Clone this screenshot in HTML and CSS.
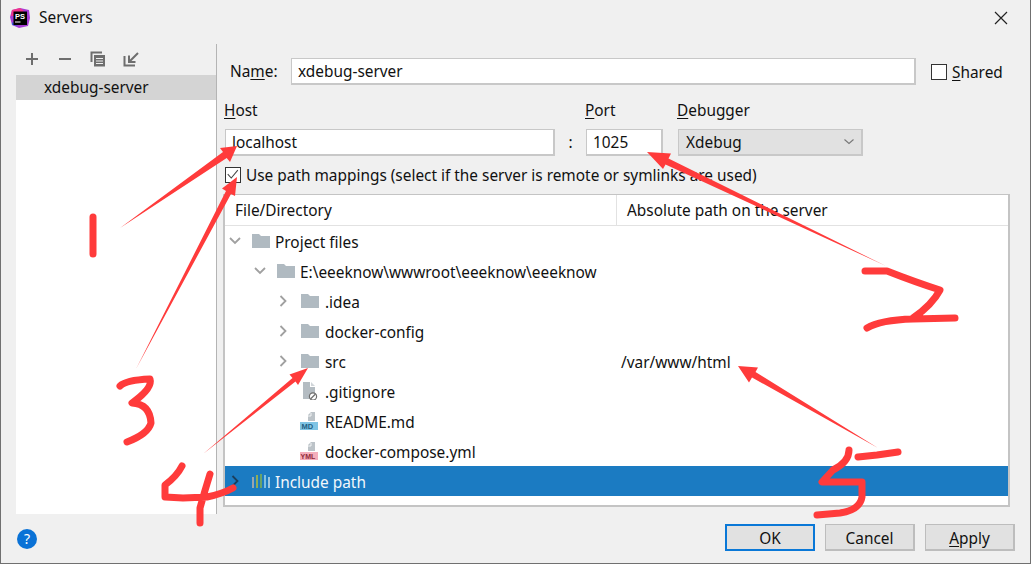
FILE: index.html
```html
<!DOCTYPE html>
<html lang="en">
<head>
<meta charset="utf-8">
<title>Servers</title>
<link rel="stylesheet" href="styles.css">
</head>
<body>
<div class="window">
  <header class="titlebar">
    <svg class="logo" viewBox="0 0 20 20" width="20" height="20">
      <path d="M2 2 L10 0 L19 2 L20 10 L18 18 L9 20 L2 17 L0 9Z" fill="#a63bd6"/>
      <path d="M2 2 L10 0 L14 3 L6 8 L1 8Z" fill="#f0338c"/>
      <path d="M2 14 L8 18 L2 17Z" fill="#3b5bdb"/>
      <rect x="3.5" y="3.5" width="13.5" height="13.5" fill="#000"/>
      <text x="5" y="10.5" class="logo-text">PS</text>
      <rect x="5" y="13.5" width="5.5" height="1" fill="#fff"/>
    </svg>
    <span class="title">Servers</span>
    <svg class="close" viewBox="0 0 14 14" width="14" height="14"><path d="M1 1 L13 13 M13 1 L1 13" stroke="#222" stroke-width="1.2" fill="none"/></svg>
  </header>

  <div class="content">
    <aside class="sidebar">
      <div class="toolbar">
        <svg viewBox="0 0 16 16" width="16" height="16"><path d="M8 2 V14 M2 8 H14" stroke="#6e6e6e" stroke-width="2" fill="none"/></svg>
        <svg viewBox="0 0 16 16" width="16" height="16"><path d="M2 8 H14" stroke="#6e6e6e" stroke-width="2" fill="none"/></svg>
        <svg viewBox="0 0 16 16" width="16" height="16"><path d="M1.5 11 V1.5 H12" stroke="#6e6e6e" stroke-width="2" fill="none"/><rect x="4" y="4" width="11" height="11.5" fill="#6e6e6e"/><path d="M6 7.5 H13 M6 10 H13 M6 12.5 H13" stroke="#f0f0f0" stroke-width="1.1"/></svg>
        <svg viewBox="0 0 16 16" width="16" height="16"><path d="M1.5 5 V14.5 H12" stroke="#6e6e6e" stroke-width="2" fill="none"/><path d="M15 2 L7 10 M6 4.5 V11 H12.5" stroke="#6e6e6e" stroke-width="2" fill="none"/></svg>
      </div>
      <div class="server-list">
        <div class="server-item">xdebug-server</div>
      </div>
    </aside>

    <main class="panel">
      <div class="name-row">
        <label class="name-label">Na<u>m</u>e:</label>
        <div class="field name-field">xdebug-server</div>
        <span class="checkbox"></span>
        <span class="shared"><u>S</u>hared</span>
      </div>

      <div class="host-grid">
        <label><u>H</u>ost</label>
        <span></span>
        <label><u>P</u>ort</label>
        <span></span>
        <label><u>D</u>ebugger</label>
        <div class="field">localhost</div>
        <span class="colon">:</span>
        <div class="field">1025</div>
        <span></span>
        <div class="select">Xdebug
          <svg viewBox="0 0 10 6" width="10" height="6"><path d="M0.5 0.5 L5 4.5 L9.5 0.5" stroke="#777" stroke-width="1.1" fill="none"/></svg>
        </div>
      </div>

      <div class="mapping-row">
        <span class="checkbox checked">
          <svg viewBox="0 0 16 16" width="14" height="14"><path d="M2 7 L6 11.5 L13.5 2.5" stroke="#444" stroke-width="1.2" fill="none"/></svg>
        </span>
        <span>Use path mappings (select if the server is remote or symlinks are used)</span>
      </div>

      <section class="table">
        <div class="thead">
          <div class="th th-file">File/Directory</div>
          <div class="th th-path">Absolute path on the server</div>
        </div>
        <div class="tr">
          <svg class="chev" viewBox="0 0 12 8" width="12" height="8"><path d="M1 1 L6 6 L11 1" stroke="#a0a0a0" stroke-width="1.8" fill="none"/></svg>
          <svg class="ficon" viewBox="0 0 18 14" width="18" height="14"><path d="M0 0 H7 L9 2 H18 V14 H0Z" fill="#b0bac1"/></svg>
          <span class="tname">Project files</span>
        </div>
        <div class="tr lvl1">
          <svg class="chev" viewBox="0 0 12 8" width="12" height="8"><path d="M1 1 L6 6 L11 1" stroke="#a0a0a0" stroke-width="1.8" fill="none"/></svg>
          <svg class="ficon" viewBox="0 0 18 14" width="18" height="14"><path d="M0 0 H7 L9 2 H18 V14 H0Z" fill="#b0bac1"/></svg>
          <span class="tname">E:\eeeknow\wwwroot\eeeknow\eeeknow</span>
        </div>
        <div class="tr lvl2">
          <svg class="chev" viewBox="0 0 12 12" width="12" height="12"><path d="M3.5 1 L8.5 6 L3.5 11" stroke="#a0a0a0" stroke-width="1.8" fill="none"/></svg>
          <svg class="ficon" viewBox="0 0 18 14" width="18" height="14"><path d="M0 0 H7 L9 2 H18 V14 H0Z" fill="#b0bac1"/></svg>
          <span class="tname">.idea</span>
        </div>
        <div class="tr lvl2">
          <svg class="chev" viewBox="0 0 12 12" width="12" height="12"><path d="M3.5 1 L8.5 6 L3.5 11" stroke="#a0a0a0" stroke-width="1.8" fill="none"/></svg>
          <svg class="ficon" viewBox="0 0 18 14" width="18" height="14"><path d="M0 0 H7 L9 2 H18 V14 H0Z" fill="#b0bac1"/></svg>
          <span class="tname">docker-config</span>
        </div>
        <div class="tr lvl2">
          <svg class="chev" viewBox="0 0 12 12" width="12" height="12"><path d="M3.5 1 L8.5 6 L3.5 11" stroke="#a0a0a0" stroke-width="1.8" fill="none"/></svg>
          <svg class="ficon" viewBox="0 0 18 14" width="18" height="14"><path d="M0 0 H7 L9 2 H18 V14 H0Z" fill="#b0bac1"/></svg>
          <span class="tname">src</span>
          <span class="tvalue">/var/www/html</span>
        </div>
        <div class="tr lvl3">
          <svg class="ficon" viewBox="0 0 18 18" width="18" height="18"><path d="M3 0 H10 V5 H15 V17 H3Z" fill="#b4bcc2"/><path d="M11 0 L15 4 H11Z" fill="#d0d5d9"/><circle cx="13" cy="14.5" r="3.6" fill="#fff" stroke="#6e6e6e" stroke-width="1.2"/><path d="M10.5 17 L15.5 12" stroke="#6e6e6e" stroke-width="1.2"/></svg>
          <span class="tname">.gitignore</span>
        </div>
        <div class="tr lvl3">
          <svg class="ficon" viewBox="0 0 18 18" width="18" height="18"><path d="M8 9 V3 L11 0 H15 V9Z" fill="#bcc3c8"/><path d="M11 1 V4 H8" stroke="#fff" stroke-width="0.8" fill="none"/><rect x="0" y="10" width="18" height="8" fill="#7fc4e4"/><text x="1.5" y="17" class="badge badge-md">MD</text></svg>
          <span class="tname">README.md</span>
        </div>
        <div class="tr lvl3">
          <svg class="ficon" viewBox="0 0 18 18" width="18" height="18"><path d="M8 9 V3 L11 0 H15 V9Z" fill="#bcc3c8"/><path d="M11 1 V4 H8" stroke="#fff" stroke-width="0.8" fill="none"/><rect x="0" y="10" width="18" height="8" fill="#f4aebb"/><text x="0.5" y="17" class="badge badge-yml">YML</text></svg>
          <span class="tname">docker-compose.yml</span>
        </div>
        <div class="tr selected">
          <svg class="chev" viewBox="0 0 12 12" width="12" height="12"><path d="M3.5 1 L8.5 6 L3.5 11" stroke="#1c3f5c" stroke-width="1.8" fill="none"/></svg>
          <svg class="ficon" viewBox="0 0 18 14" width="18" height="14"><path d="M1 3 V14" stroke="#9aa5ad" stroke-width="2"/><path d="M5 1 V14" stroke="#8fae5a" stroke-width="2"/><path d="M9 0 V14" stroke="#6aa36a" stroke-width="2"/><path d="M13 1 V14" stroke="#7fbfe0" stroke-width="2"/><path d="M17 3 V14" stroke="#9fc6dd" stroke-width="2"/></svg>
          <span class="tname">Include path</span>
        </div>
      </section>
    </main>
  </div>

  <footer class="footer">
    <span class="help">?</span>
    <div class="buttons">
      <button class="btn btn-default">OK</button>
      <button class="btn">Cancel</button>
      <button class="btn"><u>A</u>pply</button>
    </div>
  </footer>

  <svg class="annotations" viewBox="0 0 1031 564" width="1031" height="564">
    <g class="arrows">
      <polygon points="120,228 226.7,158 230,162 237,146 220,148 223,152"/>
      <polygon points="136,369 231,194 235,196 237,177 222,188.5 226,191"/>
      <polygon points="886,266 668.5,158.5 671,153.5 647,152 663,169 665.5,164.5"/>
      <polygon points="203,454 295.5,381.5 298,385 308,368 289.5,374.5 292.5,378"/>
      <polygon points="878,448 755.5,372 758,367.5 738,366 749,382.5 752,377.5"/>
    </g>
    <g class="digits">
      <path d="M93 217 V254"/>
      <path d="M120 386 Q126 380 150 379 Q153 388 132 403 Q150 404 151 423 Q148 434 127 442"/>
      <path d="M865 271 L887 271 Q915 282 940 290 Q932 305 913 318 M867 328 Q880 320 913 319 L955 318"/>
      <path d="M182 466 Q177 476 165 485 L165 497 L183 498 L207 497 Q222 494 233 488 M210 474 Q205 490 200 508 L200 523"/>
      <path d="M849 450 Q849 462 833 470 L822 482 L862 482 L862 497 Q860 510 840 513 L817 515 M858 457 L877 455 L898 452"/>
    </g>
  </svg>
</div>
</body>
</html>
```
FILE: styles.css
```css
* { box-sizing: border-box; }
html, body { margin: 0; padding: 0; }
body {
  width: 1031px;
  height: 564px;
  overflow: hidden;
  font-family: "Noto Sans", "Open Sans", sans-serif;
  font-size: 15.4px;
  color: #111;
}
u { text-decoration-thickness: 1px; text-underline-offset: 2px; }

.window {
  position: relative;
  width: 1031px;
  height: 564px;
  background: #f0f0f0;
  border: 1px solid #707070;
  border-top: 0;
  display: flex;
  flex-direction: column;
}

.titlebar {
  height: 35px;
  flex: none;
  display: flex;
  align-items: center;
  padding-left: 9px;
  padding-right: 22px;
}
.logo { flex: none; margin-top: 1px; }
.logo-text { font: bold 7.5px "Liberation Sans", sans-serif; fill: #fff; }
.title { margin-left: 9px; }
.close { margin-left: auto; }

.content {
  height: 479px;
  flex: none;
  margin-top: 9px;
  display: flex;
}
.sidebar {
  width: 200px;
  margin-left: 15px;
  flex: none;
  display: flex;
  flex-direction: column;
}
.toolbar {
  height: 30px;
  flex: none;
  display: flex;
  align-items: center;
  gap: 17px;
  padding: 0 0 0 8px;
}
.toolbar svg { flex: none; }
.server-list {
  height: 439px;
  flex: none;
  margin-top: 1px;
  background: #fff;
}
.server-item {
  height: 25px;
  line-height: 25px;
  background: #d4d4d4;
  padding-left: 28px;
}

.panel {
  flex: 1;
  min-width: 0;
  border-left: 1px solid #b4b4b4;
  padding: 14px 20px 0 8px;
  height: 470px;
}

.field {
  height: 27px;
  line-height: 25px;
  background: #fff;
  border: 2px solid #c8c8c8;
  border-width: 1px 2px 2px 1px;
  padding-left: 6px;
}
.name-row {
  display: flex;
  align-items: center;
  height: 27px;
}
.name-label { width: 66px; padding-left: 5px; flex: none; }
.name-field { width: 625px; flex: none; }
.checkbox {
  width: 16px;
  height: 16px;
  flex: none;
  border: 1px solid #333;
  background: #fff;
  display: flex;
  align-items: center;
  justify-content: center;
}
.name-row .checkbox { margin-left: 15px; }
.shared { margin-left: 5px; padding-top: 2px; }

.host-grid {
  display: grid;
  grid-template-columns: 330px 31px 77px 15px 185px;
  grid-template-rows: 20px 27px;
  row-gap: 9px;
  margin-top: 15px;
}
.host-grid label { line-height: 22px; margin-left: -1px; }
.colon { line-height: 27px; text-align: center; }
.select {
  height: 27px;
  background: #e1e1e1;
  border: 2px solid #c8c8c8;
  border-width: 1px 2px 2px 1px;
  padding: 0 7px;
  line-height: 27px;
  display: flex;
  align-items: center;
  justify-content: space-between;
}

.mapping-row {
  display: flex;
  align-items: center;
  gap: 5px;
  height: 16px;
  margin-top: 11px;
}

.table {
  margin-top: 11px;
  margin-left: -2px;
  width: 787px;
  height: 313px;
  background: #fff;
  border: 2px solid #c4c4c4;
  border-top-width: 1px;
}
.thead {
  display: flex;
  height: 31px;
  border-bottom: 1px solid #e2e2e2;
}
.th { line-height: 31px; }
.th-file { width: 392px; padding-left: 10px; border-right: 1px solid #e2e2e2; }
.th-path { padding-left: 10px; }

.tr {
  display: flex;
  align-items: center;
  height: 30px;
  padding-left: 4px;
}
.tname, .tvalue { position: relative; top: 1px; }
.lvl1 { padding-left: 29px; }
.lvl2 { padding-left: 52px; }
.lvl3 { padding-left: 75px; }
.chev { width: 12px; flex: none; margin-right: 11px; }
.lvl2 .chev { margin-right: 12px; }
.ficon { flex: none; margin-right: 5px; }
.lvl2 .ficon { margin-right: 6px; }
.lvl3 .ficon { margin-right: 7px; }
.tname { flex: none; }
.tvalue { margin-left: auto; width: 387px; flex: none; }
.selected { background: #1b7bc2; color: #f2f7fb; }
.badge { font: bold 7.5px "Liberation Sans", sans-serif; }
.badge-md { fill: #225f82; }
.badge-yml { fill: #8f2a3a; font-size: 7px; }

.footer {
  flex: 1;
  display: flex;
  align-items: flex-start;
  justify-content: space-between;
  padding: 1px 15px 0 16px;
}
.help {
  width: 20px;
  height: 20px;
  margin-top: 5px;
  border-radius: 50%;
  background: #0a72d6;
  color: #fff;
  text-align: center;
  line-height: 20px;
  font-size: 14px;
}
.buttons { display: flex; gap: 10px; }
.btn {
  width: 90px;
  height: 27px;
  padding: 2px 0 0;
  background: #e1e1e1;
  border: 2px solid #bdbdbd;
  border-width: 1px 2px 2px 1px;
  font: inherit;
  color: #111;
}
.btn-default { border: 2px solid #0a78d7; }

.annotations {
  position: absolute;
  left: -1px;
  top: 0;
  pointer-events: none;
}
.arrows polygon { fill: #ff3b3b; }
.digits path {
  fill: none;
  stroke: #ff3b3b;
  stroke-width: 7;
  stroke-linecap: round;
  stroke-linejoin: round;
}
```
